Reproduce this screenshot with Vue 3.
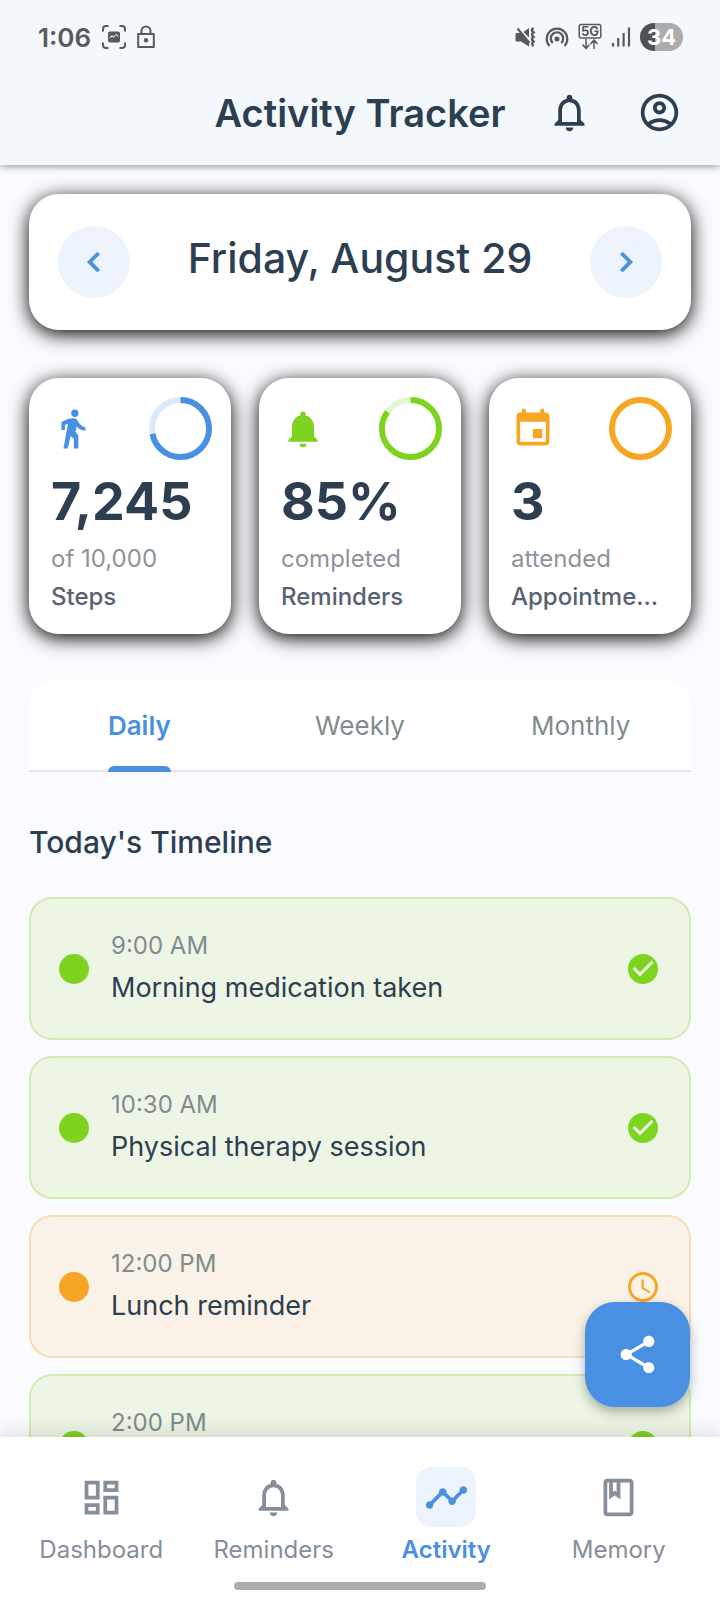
<script setup>
import { ref } from 'vue'

const icons = {
  bell: 'M12 22c1.1 0 2-.9 2-2h-4c0 1.1.9 2 2 2zm6-6v-5c0-3.07-1.63-5.64-4.5-6.32V4c0-.83-.67-1.5-1.5-1.5s-1.5.67-1.5 1.5v.68C7.64 5.36 6 7.92 6 11v5l-2 2v1h16v-1l-2-2zm-2 1H8v-6c0-2.48 1.51-4.5 4-4.5s4 2.02 4 4.5v6z',
  bellFilled: 'M12 22c1.1 0 2-.9 2-2h-4c0 1.1.89 2 2 2zm6-6v-5c0-3.07-1.64-5.64-4.5-6.32V4c0-.83-.67-1.5-1.5-1.5s-1.5.67-1.5 1.5v.68C7.63 5.36 6 7.92 6 11v5l-2 2v1h16v-1l-2-2z',
  account: 'M12 2C6.48 2 2 6.48 2 12s4.48 10 10 10 10-4.48 10-10S17.52 2 12 2zM7.35 18.5C8.66 17.56 10.26 17 12 17s3.34.56 4.65 1.5C15.34 19.44 13.74 20 12 20s-3.34-.56-4.65-1.5zm10.79-1.38C16.45 15.8 14.32 15 12 15s-4.45.8-6.14 2.12C4.7 15.73 4 13.95 4 12c0-4.42 3.58-8 8-8s8 3.58 8 8c0 1.95-.7 3.73-1.86 5.12zM12 6c-1.93 0-3.5 1.57-3.5 3.5S10.07 13 12 13s3.5-1.57 3.5-3.5S13.93 6 12 6zm0 5c-.83 0-1.5-.67-1.5-1.5S11.17 8 12 8s1.5.67 1.5 1.5S12.83 11 12 11z',
  left: 'M15.41 7.41L14 6l-6 6 6 6 1.41-1.41L10.83 12z',
  right: 'M10 6L8.59 7.41 13.17 12l-4.58 4.59L10 18l6-6z',
  walk: 'M15 3.400a2 2 0 1 1-4 0a2 2 0 1 1 4 0zM9.500 6.400L12.500 6.100c.8 0 1.400.4 1.800 1l1 1.600c.8 1.300 2 2 3.500 2.300v1.900c-2-.1-3.700-1-4.800-2.300l-.6 3 1.500 1.900V22.600h-2.400v-5.200l-1.800-1.600-1.600 6.800H6.800L9.300 9 7.600 9.800v2.700H5.700V8.200z',
  event: 'M17 12h-5v5h5v-5zM16 1v2H8V1H6v2H5c-1.11 0-1.99.9-1.99 2L3 19c0 1.1.89 2 2 2h14c1.1 0 2-.9 2-2V5c0-1.1-.9-2-2-2h-1V1h-2zm3 18H5V8h14v11z',
  check: 'M12 2C6.48 2 2 6.48 2 12s4.48 10 10 10 10-4.48 10-10S17.52 2 12 2zm-2 15l-5-5 1.41-1.41L10 14.17l7.59-7.59L19 8l-9 9z',
  clock: 'M11.99 2C6.47 2 2 6.48 2 12s4.47 10 9.99 10C17.52 22 22 17.52 22 12S17.52 2 11.99 2zM12 20c-4.42 0-8-3.58-8-8s3.58-8 8-8 8 3.58 8 8-3.58 8-8 8zm.5-13H11v6l5.25 3.15.75-1.23-4.5-2.67z',
  share: 'M18 16.08c-.76 0-1.44.3-1.96.77L8.91 12.7c.05-.23.09-.46.09-.7s-.04-.47-.09-.7l7.05-4.11c.54.5 1.25.81 2.04.81 1.66 0 3-1.34 3-3s-1.34-3-3-3-3 1.34-3 3c0 .24.04.47.09.7L8.04 9.81C7.5 9.31 6.79 9 6 9c-1.66 0-3 1.34-3 3s1.34 3 3 3c.79 0 1.5-.31 2.04-.81l7.12 4.16c-.05.21-.08.43-.08.65 0 1.61 1.31 2.92 2.92 2.92 1.61 0 2.92-1.31 2.92-2.92s-1.31-2.92-2.92-2.92z',
  dashboard: 'M19 5v2h-4V5h4M9 5v6H5V5h4m10 8v6h-4v-6h4M9 17v2H5v-2h4M21 3h-8v6h8V3zM11 3H3v10h8V3zm10 8h-8v10h8V11zm-10 4H3v6h8v-6z',
  timeline: 'M23 8c0 1.1-.9 2-2 2-.18 0-.35-.02-.51-.07l-3.56 3.55c.05.16.07.34.07.52 0 1.1-.9 2-2 2s-2-.9-2-2c0-.18.02-.36.07-.52l-2.55-2.55c-.16.05-.34.07-.52.07s-.36-.02-.52-.07l-4.55 4.56c.05.16.07.33.07.51 0 1.1-.9 2-2 2s-2-.9-2-2 .9-2 2-2c.18 0 .35.02.51.07l4.56-4.55C8.02 9.36 8 9.18 8 9c0-1.1.9-2 2-2s2 .9 2 2c0 .18-.02.36-.07.52l2.55 2.55c.16-.05.34-.07.52-.07s.36.02.52.07l3.55-3.56C19.02 8.35 19 8.18 19 8c0-1.1.9-2 2-2s2 .9 2 2z',
  book: 'M18 2H6c-1.1 0-2 .9-2 2v16c0 1.1.9 2 2 2h12c1.1 0 2-.9 2-2V4c0-1.1-.9-2-2-2zM9 4h2v5l-1-.75L9 9V4zm9 16H6V4h1v9l3-2.25L13 13V4h5v16z',
}

const stats = [
  { tone: 'blue', icon: icons.walk, percent: 72, value: '7,245', sub: 'of 10,000', label: 'Steps' },
  { tone: 'green', icon: icons.bellFilled, percent: 85, value: '85%', sub: 'completed', label: 'Reminders' },
  { tone: 'orange', icon: icons.event, percent: 100, value: '3', sub: 'attended', label: 'Appointme...' },
]

const tabs = ['Daily', 'Weekly', 'Monthly']
const activeTab = ref('Daily')

const timeline = [
  { time: '9:00 AM', title: 'Morning medication taken', done: true },
  { time: '10:30 AM', title: 'Physical therapy session', done: true },
  { time: '12:00 PM', title: 'Lunch reminder', done: false },
  { time: '2:00 PM', title: '', done: true },
]

const navItems = [
  { label: 'Dashboard', icon: icons.dashboard },
  { label: 'Reminders', icon: icons.bell },
  { label: 'Activity', icon: icons.timeline, active: true },
  { label: 'Memory', icon: icons.book },
]
</script>

<template>
  <div class="app">
    <header class="top">
      <div class="status">
        <div class="status-left">
          <span class="clock">1:06</span>
          <svg class="capture" viewBox="0 0 24 24" aria-hidden="true">
            <path d="M1 6.500V4a3 3 0 0 1 3-3h2.500M17.500 1H20a3 3 0 0 1 3 3v2.500M23 17.500V20a3 3 0 0 1-3 3h-2.500M6.500 23H4a3 3 0 0 1-3-3v-2.500" fill="none" stroke="currentColor" stroke-width="2" />
            <path fill-rule="evenodd" d="M8 6.500h8a2 2 0 0 1 2 2v7a2 2 0 0 1-2 2H8a2 2 0 0 1-2-2v-7a2 2 0 0 1 2-2zM7.800 13.500l2.200-2 1.800 1.200 2.200-2.700 2.200 2v-1.600l-2.200-1.400-2.300 2.600-1.700-1.300-2.200 1.700z" fill="currentColor" />
          </svg>
          <svg class="lock" viewBox="0 0 18 24" aria-hidden="true">
            <path d="M1.200 9h15.600v13H1.200zM4.500 9V6a4.500 4.500 0 0 1 9 0v3" fill="none" stroke="currentColor" stroke-width="2" stroke-linejoin="round" />
            <circle cx="9" cy="15.300" r="2.200" fill="currentColor" />
          </svg>
        </div>
        <div class="status-right">
          <svg width="21" height="24" viewBox="0 0 21 24" aria-hidden="true">
            <path d="M1 8h4.500L14 17.500v4L6 16.500H1.500A1 1 0 0 1 .5 15.500v-6zM14 3v9.500L8.500 7z" fill="currentColor" />
            <path d="M2.500 3.500l12 14.500" stroke="currentColor" stroke-width="2" />
            <path d="M18.500 3q-3 2 0 4.500-3 2 0 4.500-3 2 0 4.500-2.500 2 0 4.500" fill="none" stroke="currentColor" stroke-width="2.500" />
          </svg>
          <svg width="24" height="24" viewBox="0 0 24 24" aria-hidden="true">
            <path d="M4.500 21a10.300 10.300 0 1 1 15 0M7.800 18a6.200 6.200 0 1 1 8.400 0" fill="none" stroke="currentColor" stroke-width="2.200" />
            <circle cx="12" cy="14" r="2.500" fill="currentColor" />
          </svg>
          <svg width="24" height="28" viewBox="0 0 24 28" aria-hidden="true">
            <rect x="1.200" y="1.500" width="21.600" height="13.500" rx="2" fill="none" stroke="currentColor" stroke-width="1.500" />
            <text x="12" y="13" text-anchor="middle" class="five-g">5G</text>
            <path d="M8 16v9.500M4.500 21.500l3.500 4 3.500-4M16 26V17M12.500 21l3.500-4 3.500 4" fill="none" stroke="currentColor" stroke-width="1.500" />
          </svg>
          <svg width="20" height="24" viewBox="0 0 20 24" aria-hidden="true">
            <path d="M2 18v3.500M7.200 13v8.500M12.600 8v13.500M18 2.500v19" stroke="currentColor" stroke-width="2.200" />
          </svg>
          <span class="battery">34</span>
        </div>
      </div>
      <div class="bar">
        <h1>Activity Tracker</h1>
        <div class="actions">
          <button type="button" aria-label="Notifications">
            <svg class="icon" viewBox="0 0 24 24"><path :d="icons.bell" /></svg>
          </button>
          <button type="button" aria-label="Account">
            <svg class="icon" viewBox="0 0 24 24"><path :d="icons.account" /></svg>
          </button>
        </div>
      </div>
    </header>

    <main>
      <section class="date card">
        <button type="button" aria-label="Previous day">
          <svg viewBox="0 0 24 24"><path :d="icons.left" /></svg>
        </button>
        <h2>Friday, August 29</h2>
        <button type="button" aria-label="Next day">
          <svg viewBox="0 0 24 24"><path :d="icons.right" /></svg>
        </button>
      </section>

      <section class="stats">
        <article v-for="s in stats" :key="s.label" class="stat card" :class="s.tone">
          <div class="stat-head">
            <svg class="stat-icon" viewBox="0 0 24 24"><path :d="s.icon" /></svg>
            <svg class="ring" viewBox="0 0 64 64">
              <circle class="track" cx="32" cy="32" r="29" />
              <circle class="progress" cx="32" cy="32" r="29" pathLength="100" :stroke-dasharray="`${s.percent} ${100 - s.percent}`" />
            </svg>
          </div>
          <strong>{{ s.value }}</strong>
          <span class="sub">{{ s.sub }}</span>
          <span class="label">{{ s.label }}</span>
        </article>
      </section>

      <div class="tabs" role="tablist">
        <button v-for="t in tabs" :key="t" type="button" role="tab" :aria-selected="t === activeTab" :class="{ active: t === activeTab }" @click="activeTab = t">
          <span>{{ t }}</span>
        </button>
      </div>

      <section>
        <h3>Today's Timeline</h3>
        <ul class="timeline">
          <li v-for="e in timeline" :key="e.time" :class="{ pending: !e.done }">
            <i class="dot"></i>
            <div class="entry">
              <time>{{ e.time }}</time>
              <p>{{ e.title }}</p>
            </div>
            <svg class="state" viewBox="0 0 24 24"><path :d="e.done ? icons.check : icons.clock" /></svg>
          </li>
        </ul>
      </section>
    </main>

    <footer>
      <button type="button" class="fab" aria-label="Share">
        <svg class="icon" viewBox="0 0 24 24"><path :d="icons.share" /></svg>
      </button>
      <nav>
        <a v-for="n in navItems" :key="n.label" href="#" :class="{ active: n.active }">
          <span class="pill"><svg class="icon" viewBox="0 0 24 24"><path :d="n.icon" /></svg></span>
          <span>{{ n.label }}</span>
        </a>
      </nav>
      <div class="home"></div>
    </footer>
  </div>
</template>

<style>
body {
  margin: 0;
}
</style>

<style scoped>
.app {
  height: 100vh;
  display: flex;
  flex-direction: column;
  overflow: hidden;
  background: #fafbfe;
  color: #2c3e50;
  font-family: Inter, Roboto, "Liberation Sans", sans-serif;
}
h1, h2, h3, p, ul {
  margin: 0;
  padding: 0;
}
button {
  margin: 0;
  padding: 0;
  border: 0;
  background: none;
  color: inherit;
  font: inherit;
  cursor: pointer;
}
svg {
  display: block;
  flex: none;
  fill: currentColor;
}
.icon {
  width: 45px;
  height: 45px;
}

/* Header */
.top {
  position: relative;
  z-index: 1;
  background: #f3f8fd;
  box-shadow: 0 2px 7px rgba(0, 0, 0, 0.36);
}
.status {
  box-sizing: border-box;
  height: 60px;
  padding: 14px 37px 0 38px;
  display: flex;
  justify-content: space-between;
  align-items: center;
  color: #58595b;
}
.status-left,
.status-right {
  display: flex;
  align-items: center;
}
.status-left {
  gap: 11px;
}
.status-right {
  gap: 9px;
}
.clock {
  font-size: 26px;
  font-weight: 600;
}
.capture {
  width: 24px;
  height: 24px;
}
.lock {
  width: 18px;
  height: 24px;
}
.five-g {
  font-size: 13px;
  font-weight: 700;
}
.battery {
  width: 43px;
  border-radius: 14px;
  background: linear-gradient(90deg, #505153 34%, #abacae 34%);
  color: #fff;
  font-size: 22px;
  font-weight: 700;
  line-height: 28px;
  text-align: center;
}
.bar {
  height: 105px;
  padding: 0 16px;
  display: grid;
  grid-template-columns: 1fr auto 1fr;
  align-items: center;
}
h1 {
  grid-column: 2;
  font-size: 38px;
  font-weight: 600;
  line-height: 46px;
}
.actions {
  display: flex;
  justify-content: flex-end;
}
.actions button {
  width: 90px;
  height: 90px;
  display: grid;
  place-items: center;
}

/* Content */
main {
  flex: 1;
  min-height: 0;
  overflow-y: auto;
  scrollbar-width: none;
  padding: 29px 29px 0;
}
.card {
  border-radius: 30px;
  background: #fff;
  box-shadow: 0 4px 19px #000;
}
.date {
  padding: 32px 29px;
  display: flex;
  justify-content: space-between;
  align-items: flex-start;
}
.date button {
  width: 72px;
  height: 72px;
  border-radius: 50%;
  display: grid;
  place-items: center;
  background: #edf3fc;
  color: #4a90e2;
}
.date svg {
  width: 40px;
  height: 40px;
  stroke: currentColor;
  stroke-width: 0.4;
}
h2 {
  font-size: 41px;
  font-weight: 500;
  line-height: 64px;
}
.stats {
  margin-top: 48px;
  display: grid;
  grid-template-columns: repeat(3, minmax(0, 1fr));
  gap: 28px;
}
.stat {
  padding: 19px 19px 23px 22px;
  display: flex;
  flex-direction: column;
}
.blue { --tone: #4a90e2; }
.green { --tone: #7ed321; }
.orange { --tone: #f5a623; }
.stat-head {
  display: flex;
  justify-content: space-between;
  align-items: center;
  color: var(--tone);
}
.stat-icon {
  width: 44px;
  height: 44px;
}
.ring {
  width: 63px;
  height: 63px;
}
.ring circle {
  fill: none;
  stroke: currentColor;
  stroke-width: 6;
}
.ring .track {
  opacity: 0.2;
}
.ring .progress {
  transform: rotate(-90deg);
  transform-origin: center;
}
strong {
  margin-top: 9px;
  font-size: 52px;
  font-weight: 700;
  line-height: 66px;
}
.sub,
.label {
  margin-top: 10px;
  overflow: hidden;
  font-size: 24px;
  line-height: 28px;
  text-overflow: ellipsis;
  white-space: nowrap;
}
.sub {
  color: #8d939b;
}
.label {
  color: #566273;
  font-weight: 500;
}
.tabs {
  margin-top: 47px;
  display: grid;
  grid-template-columns: repeat(3, 1fr);
  border-bottom: 2px solid #dfe4ec;
  border-radius: 22px 22px 0 0;
  background: #fff;
  color: #7f8c8d;
  font-size: 26px;
}
.tabs button {
  display: flex;
  justify-content: center;
  margin-bottom: -2px;
}
.tabs span {
  box-sizing: border-box;
  height: 91px;
  border-bottom: 6px solid transparent;
  line-height: 90px;
}
.tabs .active {
  color: #4a90e2;
  font-weight: 600;
}
.tabs .active span {
  position: relative;
}
.tabs .active span::after {
  content: "";
  position: absolute;
  left: 0;
  right: 0;
  bottom: -6px;
  height: 6px;
  border-radius: 6px 6px 0 0;
  background: #4a90e2;
}
h3 {
  margin-top: 51px;
  font-size: 30px;
  font-weight: 500;
  line-height: 38px;
}
.timeline {
  margin-top: 36px;
  display: grid;
  gap: 16px;
  list-style: none;
}
.timeline li {
  padding: 32px 28px;
  display: flex;
  align-items: center;
  gap: 22px;
  border: 2px solid #d0ecb3;
  border-radius: 23px;
  background: #edf6e4;
  color: #7ed321;
}
.timeline .pending {
  border-color: #f6deb5;
  background: #faf2e6;
  color: #f5a623;
}
.dot {
  width: 30px;
  height: 30px;
  border-radius: 50%;
  background: currentColor;
}
.entry {
  flex: 1;
}
time {
  display: block;
  color: #7f8c8d;
  font-size: 24px;
  line-height: 30px;
}
.entry p {
  min-height: 36px;
  margin-top: 9px;
  color: #2c3e50;
  font-size: 27px;
  line-height: 36px;
}
.state {
  width: 36px;
  height: 36px;
}

/* Bottom navigation */
footer {
  position: relative;
  background: #fff;
  box-shadow: 0 -4px 20px rgba(0, 0, 0, 0.12);
}
.fab {
  position: absolute;
  right: 30px;
  bottom: calc(100% + 30px);
  width: 105px;
  height: 105px;
  border-radius: 30px;
  display: grid;
  place-items: center;
  background: #4a90e2;
  color: #fff;
  box-shadow: 0 5px 12px rgba(0, 0, 0, 0.3);
}
nav {
  padding: 30px 15px 18px;
  display: grid;
  grid-template-columns: repeat(4, 1fr);
}
nav a {
  display: flex;
  flex-direction: column;
  align-items: center;
  gap: 9px;
  color: #858e99;
  font-size: 24px;
  line-height: 28px;
  text-decoration: none;
}
nav .active {
  color: #4a90e2;
  font-weight: 600;
}
.pill {
  width: 60px;
  height: 60px;
  border-radius: 15px;
  display: grid;
  place-items: center;
}
.active .pill {
  background: #edf3fc;
}
.home {
  width: 35%;
  height: 8px;
  margin: 0 auto 10px;
  border-radius: 4px;
  background: #adadad;
}
footer::after {
  content: "";
  display: table;
}
</style>
